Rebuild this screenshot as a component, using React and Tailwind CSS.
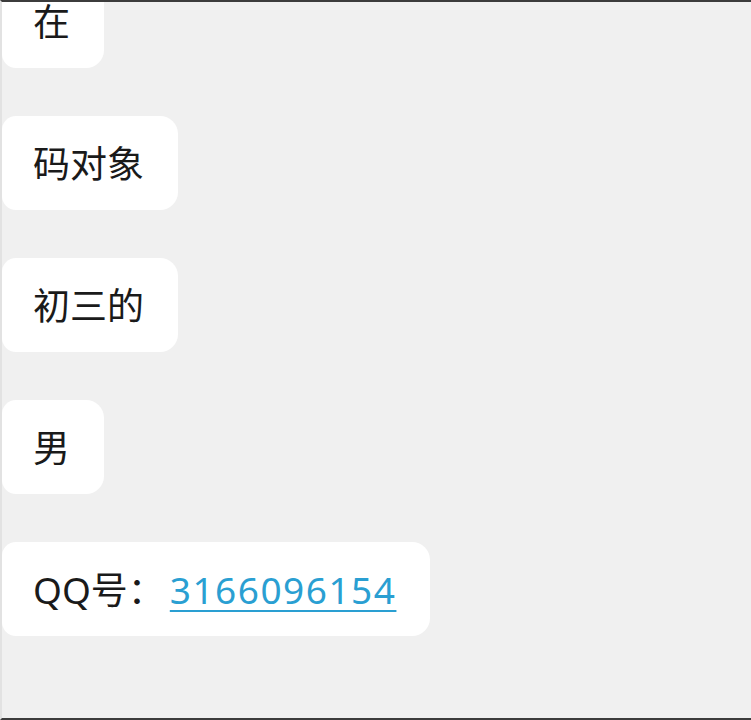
const messages = [
  { id: 1, text: '在' },
  { id: 2, text: '码对象' },
  { id: 3, text: '初三的' },
  { id: 4, text: '男' },
]

const Bubble = ({ children }) => (
  <div className="self-start h-[94px] flex items-center pl-[31px] pr-[34px] bg-white rounded-r-[18px] rounded-l-[14px] text-[37px] leading-none text-[#1a1a1a]">
    {children}
  </div>
)

export default function App() {
  return (
    <div
      className="w-[751px] h-[720px] overflow-hidden bg-[#f0f0f0] border-t-2 border-t-[#3c3c3c] border-b-2 border-b-[#3c3c3c] border-l-2 border-l-[#e2e2e2]"
      style={{ fontFamily: '"Noto Sans", "Noto Sans CJK SC", sans-serif' }}
    >
      <div className="flex flex-col gap-[48px] -mt-[28px]">
        {messages.map((m) => (
          <Bubble key={m.id}>{m.text}</Bubble>
        ))}
        <Bubble>
          <span>QQ号：</span>
          <span className="ml-[5px] tracking-[1.5px] text-[#2a9fd2] underline decoration-[2px] underline-offset-[6px]">
            3166096154
          </span>
        </Bubble>
      </div>
    </div>
  )
}
